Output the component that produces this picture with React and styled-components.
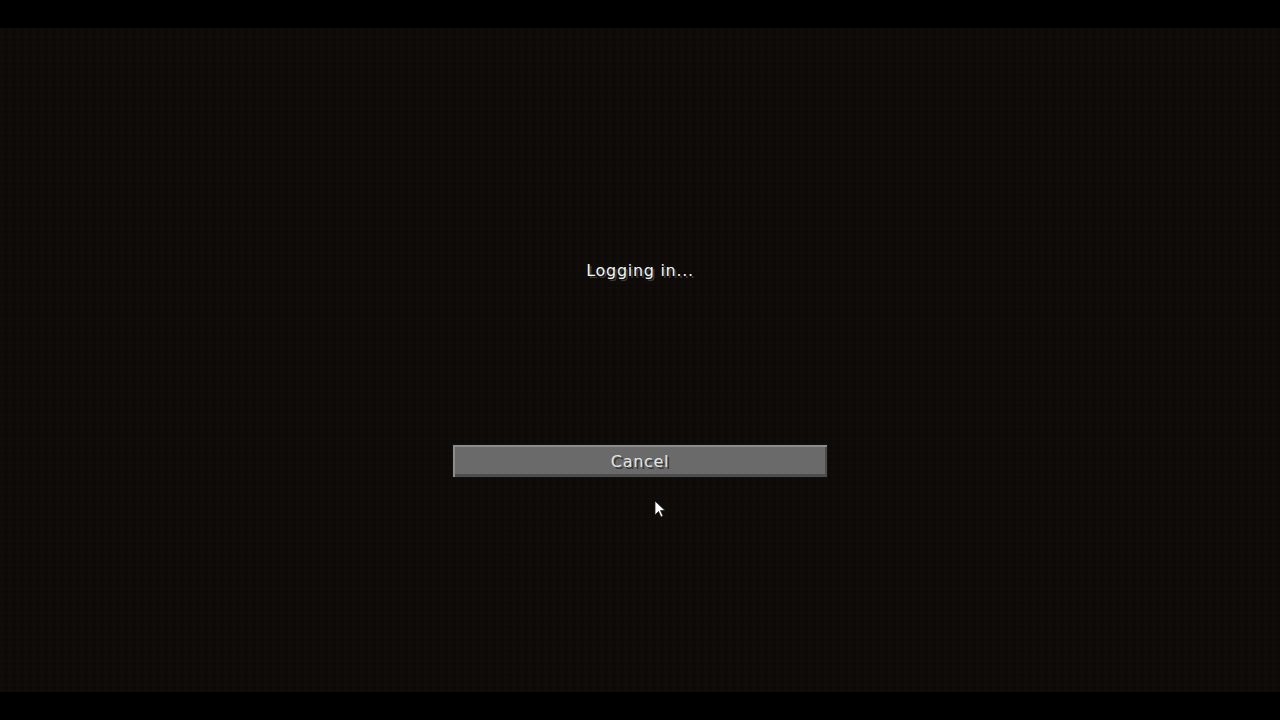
import React from "react";
import styled, { createGlobalStyle } from "styled-components";

const Global = createGlobalStyle`
  html, body { margin: 0; padding: 0; background: #000; }
  body { font-family: "DejaVu Sans", "Liberation Sans", sans-serif; }
`;

const Frame = styled.div`
  width: 1280px;
  height: 720px;
  display: flex;
  flex-direction: column;
  background: #000;
  overflow: hidden;
`;

const Bar = styled.div`
  height: 28px;
  flex: none;
  background: #000;
`;

const Screen = styled.main`
  position: relative;
  flex: 1;
  display: flex;
  flex-direction: column;
  align-items: center;
  padding-top: 233px;
  background-color: #0d0906;
  background-image:
    repeating-linear-gradient(0deg, rgba(255,240,220,0.008) 0 3px, rgba(0,0,0,0.02) 3px 6px),
    repeating-linear-gradient(90deg, rgba(255,240,220,0.006) 0 4px, rgba(0,0,0,0.02) 4px 8px);
`;

const Title = styled.div`
  font-family: "DejaVu Sans", sans-serif;
  font-size: 16px;
  line-height: 20px;
  letter-spacing: 0.7px;
  color: #f4f4f4;
  text-shadow: 2px 2px 0 #3a3a3a;
`;

const Button = styled.button`
  margin-top: 163px;
  width: 376px;
  height: 34px;
  box-sizing: border-box;
  background: #6a6a6a;
  border: 1px solid #111;
  box-shadow: inset 2px 2px 0 #8c8c8c, inset -2px -3px 0 #4d4d4d;
  font-family: "DejaVu Sans", sans-serif;
  font-size: 16px;
  letter-spacing: 0.7px;
  color: #e4e4e4;
  text-shadow: 2px 2px 0 #3a3a3a;
  padding: 0;
  cursor: default;
`;

const Cursor = styled.svg`
  position: absolute;
  left: 654px;
  top: 472px;
`;

export default function App() {
  return (
    <>
      <Global />
      <Frame>
        <Bar />
        <Screen>
          <Title>Logging in...</Title>
          <Button>Cancel</Button>
          <Cursor width="14" height="20" viewBox="0 0 14 20">
            <path d="M1 1 L1 15 L4.5 11.5 L7 17 L9 16 L6.5 10.5 L11 10.5 Z" fill="#fff" stroke="#222" strokeWidth="0.8" />
          </Cursor>
        </Screen>
        <Bar />
      </Frame>
    </>
  );
}
